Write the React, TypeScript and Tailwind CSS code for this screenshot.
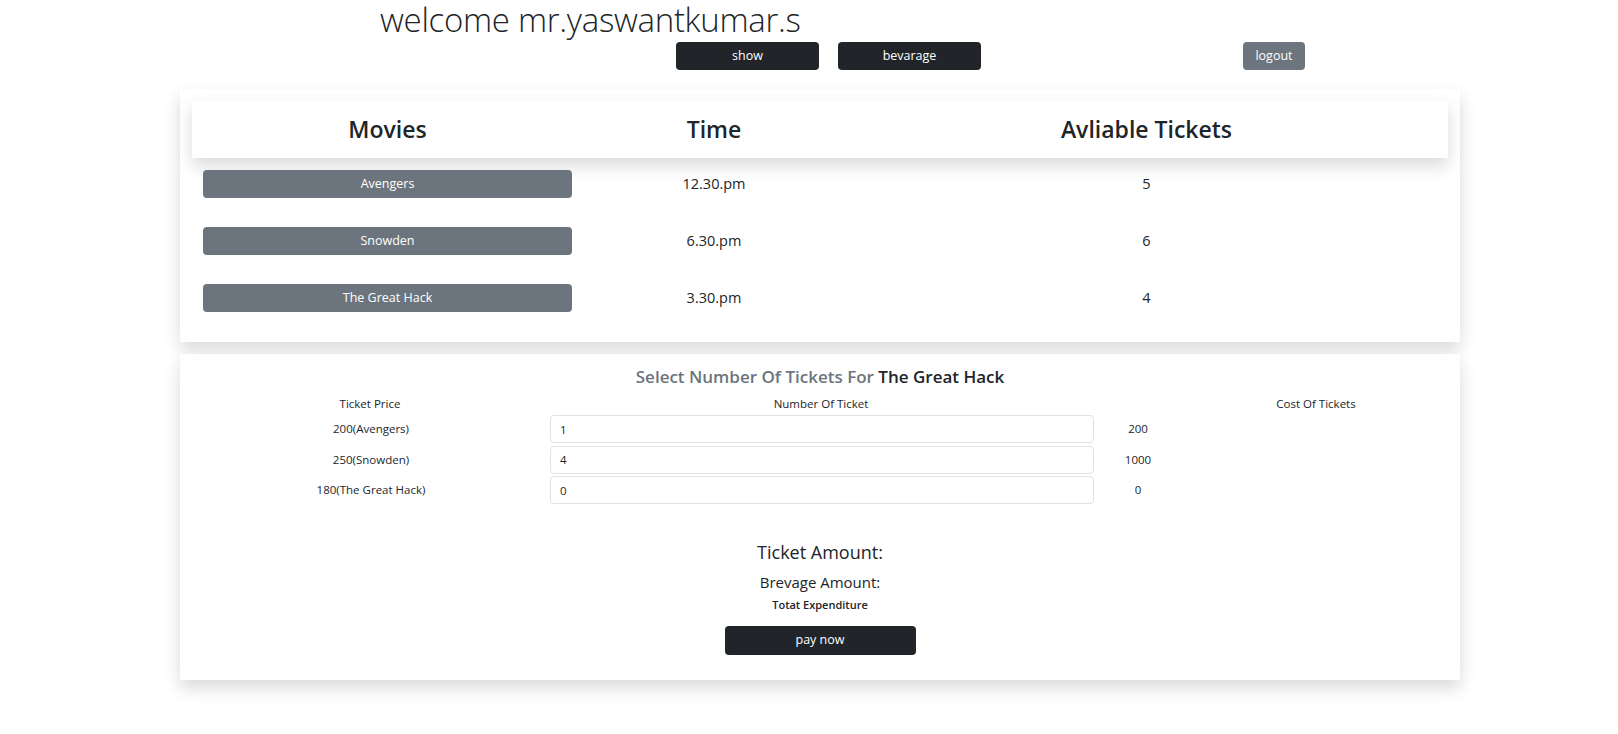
import { useState } from "react";

const movies = [
  { name: "Avengers", time: "12.30.pm", left: 5, price: 200 },
  { name: "Snowden", time: "6.30.pm", left: 6, price: 250 },
  { name: "The Great Hack", time: "3.30.pm", left: 4, price: 180 },
];

export default function App() {
  const [counts, setCounts] = useState<string[]>(["1", "4", "0"]);
  const [selected, setSelected] = useState<string>("The Great Hack");

  const setCount = (i: number, v: string) => {
    const next = [...counts];
    next[i] = v;
    setCounts(next);
  };

  return (
    <div className="min-h-screen bg-white text-[#212529] font-['Open_Sans',sans-serif]">
      {/* greeting */}
      <h2 className="pl-[380px] text-[33px] font-light leading-[39px] tracking-[-0.3px]">
        welcome mr.yaswantkumar.s
      </h2>

      {/* top buttons */}
      <div className="mt-[3px] flex items-center">
        <button className="ml-[676px] h-[28px] w-[143px] rounded-[4px] bg-[#212529] text-[12.5px] text-white">
          show
        </button>
        <button className="ml-[19px] h-[28px] w-[143px] rounded-[4px] bg-[#212529] text-[12.5px] text-white">
          bevarage
        </button>
        <button className="ml-[262px] h-[28px] w-[62px] rounded-[4px] bg-[#6c757d] text-[12.5px] text-white">
          logout
        </button>
      </div>

      {/* movies table */}
      <div className="ml-[180px] mt-[19px] w-[1280px] bg-white px-[12px] pb-[30px] pt-[12px] shadow-[0_8px_16px_rgba(0,0,0,0.15)]">
        <div className="flex h-[57px] items-center bg-white text-[23px] font-semibold shadow-[0_8px_16px_rgba(0,0,0,0.15)]">
          <div className="w-[391px] text-center">Movies</div>
          <div className="w-[262px] text-center">Time</div>
          <div className="w-[603px] text-center">Avliable Tickets</div>
        </div>
        <div className="mt-[12px] flex flex-col gap-[29px]">
          {movies.map((m) => (
            <div key={m.name} className="flex h-[28px] items-center text-[14.5px] font-medium">
              <div className="w-[391px] px-[11px]">
                <button
                  onClick={() => setSelected(m.name)}
                  className="h-[28px] w-full rounded-[4px] bg-[#6c757d] text-[12.5px] font-normal text-white"
                >
                  {m.name}
                </button>
              </div>
              <div className="w-[262px] text-center">{m.time}</div>
              <div className="w-[603px] text-center">{m.left}</div>
            </div>
          ))}
        </div>
      </div>

      {/* ticket selection */}
      <div className="ml-[180px] mt-[12px] w-[1280px] bg-white pb-[25px] pt-[12px] shadow-[0_8px_16px_rgba(0,0,0,0.15)]">
        <h5 className="text-center text-[17px] font-semibold leading-[22px]">
          <span className="text-[#6c757d]">Select Number Of Tickets For </span>
          {selected}
        </h5>

        <div className="mt-[8px] flex text-[11.5px] leading-[15px]">
          <div className="ml-[12px] w-[356px] text-center">Ticket Price</div>
          <div className="w-[546px] text-center">Number Of Ticket</div>
          <div className="ml-[122px] w-[200px] text-center">Cost Of Tickets</div>
        </div>

        <div className="mt-[4px] flex flex-col gap-[2.5px] text-[11.5px]">
          {movies.map((m, i) => (
            <div key={m.name} className="flex h-[28px] items-center">
              <div className="ml-[12px] w-[358px] text-center">
                {m.price}({m.name})
              </div>
              <input
                value={counts[i]}
                onChange={(e) => setCount(i, e.target.value)}
                className="h-[28px] w-[544px] rounded-[4px] border border-[#dee2e6] px-[9px] text-[11.5px] text-[#212529] outline-none"
              />
              <div className="w-[88px] text-center">{m.price * (Number(counts[i]) || 0) || 0}</div>
            </div>
          ))}
        </div>

        <div className="mt-[36px] flex flex-col items-center">
          <h4 className="text-[18px] font-medium leading-[24px]">Ticket Amount:</h4>
          <h5 className="mt-[9px] text-[15px] leading-[19px]">Brevage Amount:</h5>
          <h6 className="mt-[5px] text-[11px] font-semibold leading-[15px]">Totat Expenditure</h6>
          <button className="mt-[14px] h-[29px] w-[191px] rounded-[4px] bg-[#212529] text-[12.5px] text-white">
            pay now
          </button>
        </div>
      </div>
    </div>
  );
}
